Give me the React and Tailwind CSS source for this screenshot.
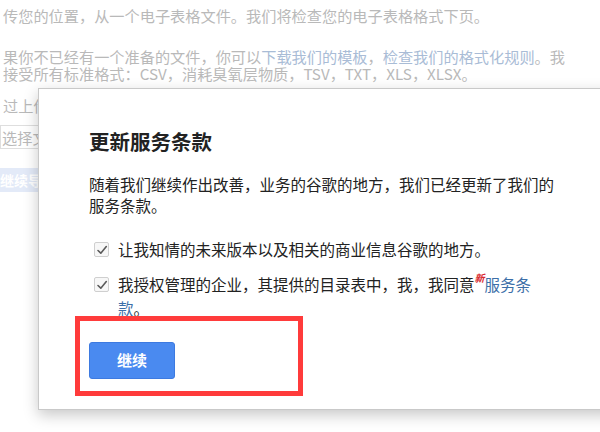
import React from 'react';

const cjk = { fontFamily: '"Noto Sans CJK SC", "Noto Sans", sans-serif' };

const Check = () => (
  <span className="mt-[5px] flex h-[15px] w-[15px] shrink-0 items-center justify-center rounded-[2px] border border-[#cfcfcf] bg-[#f7f7f7]">
    <svg width="12" height="12" viewBox="0 0 12 12" fill="none">
      <path d="M2 6.5 L4.8 9.2 L10.3 2.6" stroke="#5a5a5a" strokeWidth="1.6" strokeLinecap="round" strokeLinejoin="round" />
    </svg>
  </span>
);

export default function App() {
  return (
    <div className="relative h-[432px] w-[600px] overflow-hidden bg-white text-[15.2px]" style={cjk}>
      {/* faded page behind the dialog */}
      <div className="flex flex-col pl-[3px] pt-[4px] text-[#b9b9b9]">
        <p className="leading-[22px] whitespace-nowrap">传您的位置，从一个电子表格文件。我们将检查您的电子表格格式下页。</p>
        <p className="mt-[22px] leading-[17px] whitespace-nowrap">
          果你不已经有一个准备的文件，你可以<span className="text-[#a9bcd6]">下载我们的模板</span>，<span className="text-[#a9bcd6]">检查我们的格式化规则</span>。我
        </p>
        <p className="leading-[17px] whitespace-nowrap">接受所有标准格式：CSV，消耗臭氧层物质，TSV，TXT，XLS，XLSX。</p>
        <p className="mt-[15px] leading-[17px] whitespace-nowrap">过上传文件：</p>
        <div className="ml-[-3px] mt-[11px] h-[24px] w-[200px] border border-[#dedede] pl-[1px] leading-[22px]">选择文件</div>
        <div className="ml-[-3px] mt-[19px] h-[24px] w-[80px] bg-[#e3eaf8] text-[14px] font-bold leading-[24px] text-white">继续导入</div>
      </div>

      {/* dialog */}
      <div className="absolute left-[38px] top-[88px] h-[322px] w-[600px] border border-[#c9c9c9] bg-white shadow-[0_5px_14px_rgba(0,0,0,0.22)]">
        <div className="flex flex-col pl-[50px] pt-[38px] text-[#222]">
          <h1 className="text-[20.5px] font-bold leading-[28px]">更新服务条款</h1>
          <p className="mt-[19px] w-[474px] text-[15.5px] leading-[21px]">
            随着我们继续作出改善，业务的谷歌的地方，我们已经更新了我们的服务条款。
          </p>
          <div className="mt-[21px] flex flex-col gap-[11px] pl-[5px] text-[15.5px] leading-[24px]">
            <div className="flex gap-[9px]">
              <Check />
              <span>让我知情的未来版本以及相关的商业信息谷歌的地方。</span>
            </div>
            <div className="flex gap-[9px]">
              <Check />
              <span className="w-[428px]">
                我授权管理的企业，其提供的目录表中，我，我同意
                <span className="align-top text-[10px] font-bold italic leading-[12px] text-[#d8282e]">新</span>
                <span className="text-[#3c6fa8]">服务条款</span>。
              </span>
            </div>
          </div>
          <div className="mt-[22px]">
            <button className="h-[37px] w-[86px] rounded-[3px] border border-[#3d7ae0] bg-[#4a8af0] text-[15px] font-bold text-white">
              继续
            </button>
          </div>
        </div>
      </div>

      {/* red annotation box */}
      <div className="absolute left-[75px] top-[316px] h-[80px] w-[228px] border-[5px] border-[#ff3b3b]" />
    </div>
  );
}
